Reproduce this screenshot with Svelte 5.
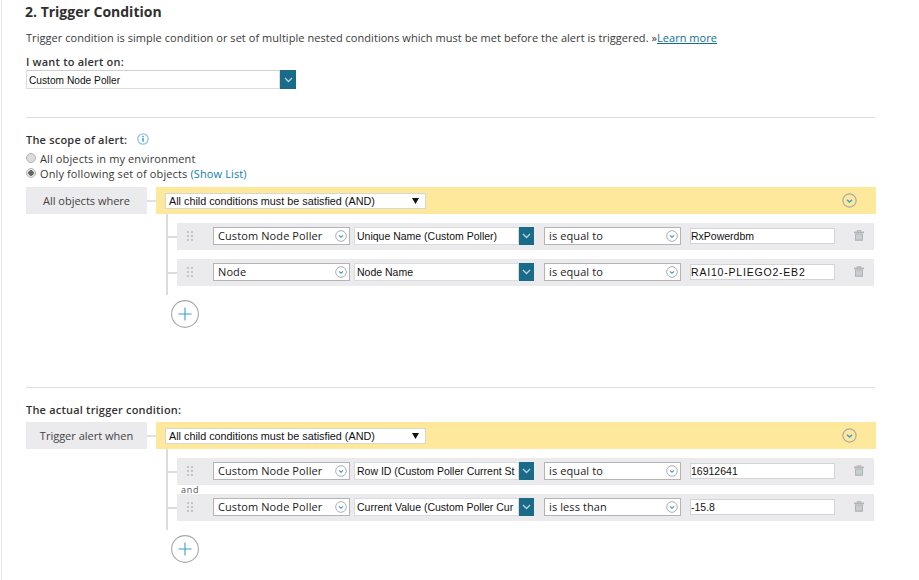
<script>
  const scopeRows = [
    { a: 'Custom Node Poller', b: 'Unique Name (Custom Poller)', op: 'is equal to', v: 'RxPowerdbm' },
    { a: 'Node', b: 'Node Name', op: 'is equal to', v: 'RAI10-PLIEGO2-EB2', wide: true }
  ];
  const triggerRows = [
    { a: 'Custom Node Poller', b: 'Row ID (Custom Poller Current St', op: 'is equal to', v: '16912641' },
    { a: 'Custom Node Poller', b: 'Current Value (Custom Poller Cur', op: 'is less than', v: '-15.8' }
  ];
  const groups = [
    { id: 'scope', label: 'All objects where', rows: scopeRows, and: false },
    { id: 'trigger', label: 'Trigger alert when', rows: triggerRows, and: true }
  ];
</script>

{#snippet chevCircle(size)}
  <svg class="circ" width={size} height={size} viewBox="0 0 14 14">
    <circle cx="7" cy="7" r="6.2" fill="none" stroke="#a9a9a9" stroke-width="1.1" />
    <path d="M4.6 6.2 7 8.4l2.4-2.2" fill="none" stroke="#3f9fc4" stroke-width="1.3" />
  </svg>
{/snippet}

{#snippet chevBtn(cls)}
  <span class={cls}>
    <svg width="9" height="6" viewBox="0 0 9 6"><path d="M1 1l3.5 3.5L8 1" fill="none" stroke="#b9d3de" stroke-width="1.3" /></svg>
  </span>
{/snippet}

{#snippet group(g)}
  <div class="grouphead">
    <div class="grouplabel">{g.label}</div>
    <div class="hconn"></div>
    <div class="yellow">
      <div class="andselect">
        <span>All child conditions must be satisfied (AND)</span>
        <svg width="7" height="6" viewBox="0 0 7 6"><path d="M0 0h7L3.5 6z" fill="#111" /></svg>
      </div>
      <span class="yicon">{@render chevCircle(15)}</span>
    </div>
  </div>
  <div class="tree">
    {#each g.rows as r, i}
      {#if i > 0 && g.and}<div class="and">and</div>{/if}
      <div class="treerow" class:spaced={i > 0 && !g.and}>
        <div class="tick"></div>
        <div class="row">
          <svg class="grip" width="6" height="10" viewBox="0 0 6 10" fill="#c4c4c6">
            <rect x="0" y="0" width="2" height="2" /><rect x="4" y="0" width="2" height="2" />
            <rect x="0" y="4" width="2" height="2" /><rect x="4" y="4" width="2" height="2" />
            <rect x="0" y="8" width="2" height="2" /><rect x="4" y="8" width="2" height="2" />
          </svg>
          <div class="fancy first"><span>{r.a}</span>{@render chevCircle(12)}</div>
          <div class="plain"><span>{r.b}</span></div>
          {@render chevBtn('btn small')}
          <div class="fancy op"><span>{r.op}</span>{@render chevCircle(12)}</div>
          <div class="value" class:wide={r.wide}>{r.v}</div>
          <svg class="trash" width="10" height="11" viewBox="0 0 10 11">
            <rect x="3.2" y="0.3" width="3.6" height="1.6" fill="none" stroke="#b3b3b5" stroke-width="0.8" />
            <rect x="0" y="1.6" width="10" height="1.6" fill="#b3b3b5" />
            <rect x="1" y="3.4" width="8" height="7.4" fill="#b3b3b5" />
            <path d="M3 4.5v5M5 4.5v5M7 4.5v5" stroke="#d6e8ee" stroke-width="1" />
          </svg>
        </div>
      </div>
    {/each}
  </div>
  <div class="plus">
    <svg width="28" height="28" viewBox="0 0 28 28">
      <circle cx="14" cy="14" r="13.4" fill="#fff" stroke="#a8a8a8" stroke-width="1.1" />
      <path d="M7.5 14h13M14 7.5v13" stroke="#3f9fc4" stroke-width="1.1" />
    </svg>
  </div>
{/snippet}

<main class="page">
  <h2>2. Trigger Condition</h2>
  <p class="desc">Trigger condition is simple condition or set of multiple nested conditions which must be met before the alert is triggered. »<a href="#learn">Learn more</a></p>
  <div class="lbl first-lbl"><b>I want to alert on:</b></div>
  <div class="alertselect">
    <div class="alerttext">Custom Node Poller</div>
    {@render chevBtn('btn big')}
  </div>
  <hr class="rule one" />

  <div class="lbl scope"><b>The scope of alert:</b>
    <svg class="info" width="12" height="12" viewBox="0 0 12 12">
      <circle cx="6" cy="6" r="5.2" fill="#fff" stroke="#8cc6e6" stroke-width="1.3" />
      <rect x="5.2" y="5" width="1.6" height="3.6" fill="#4a9fd0" /><rect x="5.2" y="2.8" width="1.6" height="1.4" fill="#4a9fd0" />
    </svg>
  </div>
  <label class="radio"><span class="dot"></span><span>All objects in my environment</span></label>
  <label class="radio"><span class="dot on"></span><span>Only following set of objects <a href="#list">(Show List)</a></span></label>

  <div class="g1">{@render group(groups[0])}</div>

  <hr class="rule two" />
  <div class="lbl trig"><b>The actual trigger condition:</b></div>
  {@render group(groups[1])}
</main>

<style>
  :global(body) { margin: 0; background: #fff; }
  .page {
    box-sizing: border-box;
    width: 918px;
    height: 580px;
    overflow: hidden;
    padding: 0 43px 0 23px;
    border-left: 1px solid #e4e4e4;
    margin: 0 0 0 1px;
    font-family: "Open Sans", sans-serif;
    font-size: 11px;
    color: #333;
  }
  h2 {
    margin: 0;
    padding-top: 2px;
    font-size: 14px;
    line-height: 19px;
    font-weight: 700;
    color: #2f2f2f;
  }
  .desc { margin: 9px 0 0 1px; line-height: 16px; letter-spacing: 0.045px; white-space: nowrap; color: #3a3a3a; }
  a { color: #0f7fa8; }
  .desc a { color: #0f6f9a; text-decoration: underline; }
  .radio a { text-decoration: none; }
  .lbl { line-height: 14px; color: #333; margin-left: 1px; }
  .lbl b { font-weight: 600; letter-spacing: 0.2px; }
  .first-lbl { margin-top: 9px; }
  .alertselect { display: flex; width: 270px; height: 19px; margin-left: 1px; margin-top: 1px; }
  .alerttext {
    flex: 1;
    box-sizing: border-box;
    border: 1px solid #dcdcdc;
    border-top-color: #cfcfcf;
    font: 10.2px/19px "Liberation Sans", sans-serif;
    color: #111;
    padding-left: 2px;
  }
  .btn { display: flex; align-items: center; justify-content: center; background: #1a6b88; flex: none; }
  .btn.big { width: 16px; }
  .btn.small { width: 15px; height: 18px; }
  .rule { border: 0; border-top: 1px solid #dedede; margin: 0 0 0 1px; width: 849px; }
  .rule.one { margin-top: 28px; }
  .scope { display: flex; align-items: center; gap: 10px; margin-top: 15px; height: 14px; }
  .info { flex: none; margin-top: -2px; }
  .radio { display: flex; align-items: center; height: 15px; gap: 4px; margin-left: 1px; letter-spacing: 0.12px; color: #3a3a3a; white-space: pre; }
  .radio:first-of-type { margin-top: 4px; }
  .dot {
    box-sizing: border-box;
    width: 10px; height: 10px;
    border-radius: 50%;
    margin-top: -2px;
    border: 1px solid #b5b5b5;
    background: #dcdcdc;
    flex: none;
  }
  .dot.on { background: radial-gradient(circle, #666 0 2.5px, #e8e8e8 3px); }
  .g1 { margin-top: 6px; height: 200px; }
  .grouphead { display: flex; align-items: stretch; height: 27px; margin-left: 1px; }
  .grouplabel {
    width: 121px;
    background: #ebeaec;
    text-align: center;
    line-height: 27px;
    color: #444;
  }
  .hconn { width: 9px; height: 2px; background: #e0e0e0; margin-top: 13px; }
  .yellow {
    flex: 1;
    background: #fde89b;
    display: flex;
    align-items: center;
    justify-content: space-between;
    padding-left: 9px;
    padding-right: 19px;
  }
  .andselect {
    box-sizing: border-box;
    width: 261px;
    height: 16px;
    background: #fff;
    border: 1px solid #d8d8d0;
    display: flex;
    align-items: center;
    justify-content: space-between;
    padding: 0 6px 0 3px;
    font: 10.8px "Liberation Sans", sans-serif;
    color: #111;
  }
  .yicon { display: flex; }
  .tree {
    margin-left: 141px;
    border-left: 2px solid #dcdcdc;
    padding-top: 9px;
    padding-bottom: 9px;
    width: 708px;
  }
  .treerow { display: flex; align-items: center; }
  .treerow.spaced { margin-top: 9px; }
  .tick { width: 9px; height: 2px; background: #dcdcdc; flex: none; }
  .and { height: 9px; line-height: 9px; font-size: 9px; letter-spacing: 0.08em; margin-left: 13px; color: #555; }
  .row {
    box-sizing: border-box;
    width: 697px;
    height: 27px;
    background: #ebeaec;
    display: flex;
    align-items: center;
    padding: 0 0 2px 10px;
  }
  .grip { flex: none; margin-right: 20px; }
  .fancy {
    box-sizing: border-box;
    height: 18px;
    background: #fff;
    border: 1px solid #b4b4b4;
    display: flex;
    align-items: center;
    justify-content: space-between;
    padding: 0 2px 0 4px;
    letter-spacing: 0.1px;
    color: #222;
    flex: none;
  }
  .fancy.first { width: 137px; }
  .fancy.op { width: 137px; margin-left: 10px; }
  .circ { flex: none; }
  .plain {
    box-sizing: border-box;
    width: 165px;
    height: 18px;
    margin-left: 4px;
    background: #fff;
    border: 1px solid #dcdcdc;
    padding-left: 2px;
    font: 10.5px/16px "Liberation Sans", sans-serif;
    color: #111;
    white-space: nowrap;
    overflow: hidden;
    flex: none;
  }
  .value {
    box-sizing: border-box;
    width: 145px;
    height: 16px;
    margin-left: 9px;
    background: #fff;
    border: 1px solid #d4d4d4;
    font: 10.5px/14px "Liberation Sans", sans-serif;
    color: #111;
    flex: none;
  }
  .value.wide { letter-spacing: 0.8px; }
  .trash { margin-left: 19px; flex: none; }
  .plus { margin-left: 146px; margin-top: 5px; height: 28px; }
  .rule.two { margin-top: 0; }
  .trig { margin-top: 15px; margin-bottom: 5px; }
</style>
